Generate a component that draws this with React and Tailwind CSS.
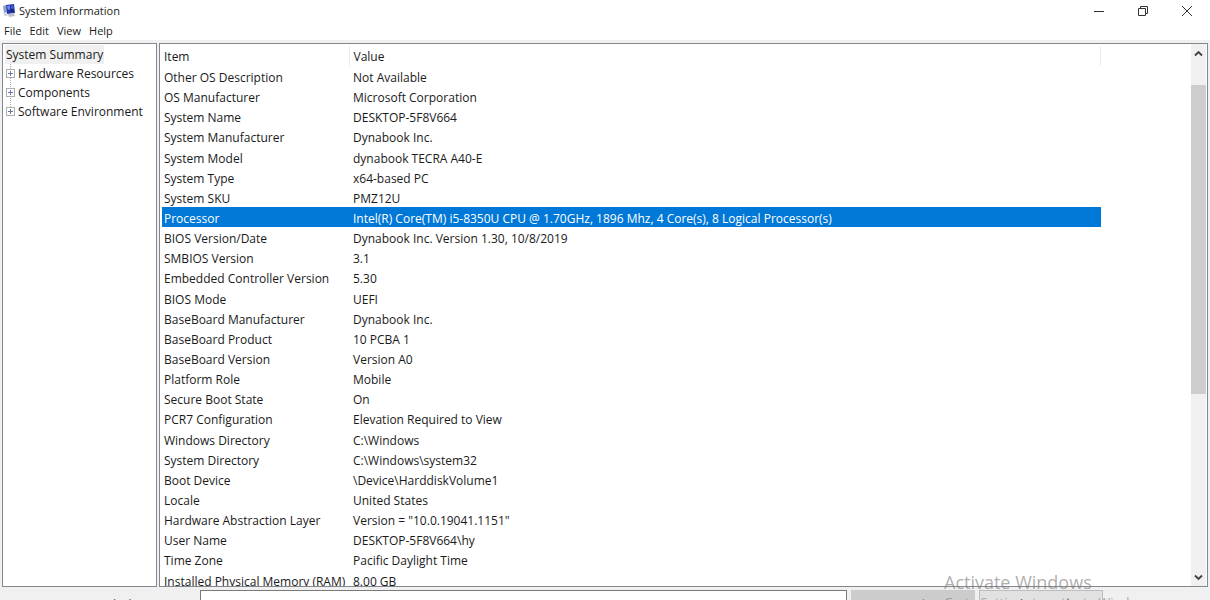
import React, { useState } from "react";

const menus = ["File", "Edit", "View", "Help"];

const categories = ["Hardware Resources", "Components", "Software Environment"];

const items = [
  ["Other OS Description", "Not Available"],
  ["OS Manufacturer", "Microsoft Corporation"],
  ["System Name", "DESKTOP-5F8V664"],
  ["System Manufacturer", "Dynabook Inc."],
  ["System Model", "dynabook TECRA A40-E"],
  ["System Type", "x64-based PC"],
  ["System SKU", "PMZ12U"],
  ["Processor", "Intel(R) Core(TM) i5-8350U CPU @ 1.70GHz, 1896 Mhz, 4 Core(s), 8 Logical Processor(s)"],
  ["BIOS Version/Date", "Dynabook Inc. Version 1.30, 10/8/2019"],
  ["SMBIOS Version", "3.1"],
  ["Embedded Controller Version", "5.30"],
  ["BIOS Mode", "UEFI"],
  ["BaseBoard Manufacturer", "Dynabook Inc."],
  ["BaseBoard Product", "10 PCBA 1"],
  ["BaseBoard Version", "Version A0"],
  ["Platform Role", "Mobile"],
  ["Secure Boot State", "On"],
  ["PCR7 Configuration", "Elevation Required to View"],
  ["Windows Directory", "C:\\Windows"],
  ["System Directory", "C:\\Windows\\system32"],
  ["Boot Device", "\\Device\\HarddiskVolume1"],
  ["Locale", "United States"],
  ["Hardware Abstraction Layer", 'Version = "10.0.19041.1151"'],
  ["User Name", "DESKTOP-5F8V664\\hy"],
  ["Time Zone", "Pacific Daylight Time"],
  ["Installed Physical Memory (RAM)", "8.00 GB"],
];

const AppIcon = () => (
  <svg width="14" height="14" viewBox="0 0 14 14" aria-hidden="true">
    <path d="M1 2 L4 1 L5 8 L2 9 Z" fill="#8f9fd0" />
    <path d="M4 1 L12 0 L13 9 L5 10 Z" fill="#2238a8" />
    <path d="M5 2 L8 1.5 L8 5 L6 6 Z" fill="#6f8de8" />
    <path d="M9 2 L11 1.5 L12 4 L9.5 5 Z" fill="#4564d4" />
    <path d="M8 6 L11 5 L12 8 L9 8 Z" fill="#1a2580" />
    <path d="M6 10 L12 9.5 L13 12 L7 13 Z" fill="#b9bfcc" />
    <path d="M1 9 L4 9 L6 12 L3 12 Z" fill="#cfd4de" />
  </svg>
);

const ExpandIcon = () => (
  <svg width="9" height="9" viewBox="0 0 9 9" shapeRendering="crispEdges" className="relative" aria-hidden="true">
    <rect x="0.5" y="0.5" width="8" height="8" fill="#fff" stroke="#adadad" />
    <path d="M2 4.5 H7 M4.5 2 V7" stroke="#6678ac" />
  </svg>
);

const Chevron = ({ d }) => (
  <svg width="9" height="9" viewBox="0 0 9 9" fill="none" stroke="#404040" strokeWidth="1.8" aria-hidden="true">
    <path d={d} />
  </svg>
);

const App = () => {
  const [selected, setSelected] = useState("Processor");

  return (
    <div className="relative flex h-screen flex-col overflow-hidden bg-[#f0f0f0] font-['Open_Sans',sans-serif] text-xs text-[#1a1a1a]">
      {/* Title bar */}
      <header className="flex h-[22px] shrink-0 items-center bg-white pr-px pl-[2px]">
        <AppIcon />
        <h1 className="ml-[3px] flex-1 text-[11px]">System Information</h1>
        <button aria-label="Minimize" className="flex h-full w-11 items-center justify-center">
          <svg width="10" height="10" viewBox="0 0 10 10" stroke="#333">
            <path d="M0 5.5 H10" />
          </svg>
        </button>
        <button aria-label="Restore" className="flex h-full w-11 items-center justify-center">
          <svg width="10" height="10" viewBox="0 0 10 10" fill="none" stroke="#333">
            <path d="M0.5 2.5 H7.5 V9.5 H0.5 Z M2.5 2.5 V0.5 H9.5 V7.5 H7.5" />
          </svg>
        </button>
        <button aria-label="Close" className="flex h-full w-11 items-center justify-center">
          <svg width="10" height="10" viewBox="0 0 10 10" stroke="#333">
            <path d="M0 0 L10 10 M10 0 L0 10" />
          </svg>
        </button>
      </header>

      {/* Menu bar */}
      <nav className="flex h-[18px] shrink-0 items-center gap-2 bg-white pl-1 text-[11px]">
        {menus.map((menu) => (
          <button key={menu}>{menu}</button>
        ))}
      </nav>

      <main className="mx-[2px] mt-[3px] flex min-h-0 flex-1 gap-[2px]">
        {/* Category tree */}
        <aside className="w-[155px] shrink-0 border border-[#828790] bg-white pt-px pl-[2px]">
          <button className="block h-[19px] bg-[#f0f0f0] px-[1px]">System Summary</button>
          <ul className="relative before:absolute before:top-0 before:bottom-[10px] before:left-[5px] before:border-l before:border-dotted before:border-[#b0b0b0]">
            {categories.map((category) => (
              <li key={category}>
                <button className="flex h-[19px] items-center gap-[3px] pl-px">
                  <ExpandIcon />
                  {category}
                </button>
              </li>
            ))}
          </ul>
        </aside>

        {/* Details list */}
        <section className="flex min-w-0 flex-1 border border-[#828790] bg-white">
          <div className="min-w-0 flex-1 overflow-hidden pt-[2px] pl-[2px]">
            <table className="h-[544px] w-[calc(100%-90px)] table-fixed border-collapse text-left whitespace-nowrap">
              <thead>
                <tr className="h-[20px]">
                  <th className="w-[187px] border-r border-[#ececec] p-0 pt-[2px] pl-[2px] font-normal">Item</th>
                  <th className="border-r border-[#ececec] p-0 pt-[2px] pl-1 font-normal">Value</th>
                </tr>
              </thead>
              <tbody>
                {items.map(([name, value]) => (
                  <tr
                    key={name}
                    onClick={() => setSelected(name)}
                    className={selected === name ? "bg-[#0078d7] text-white" : ""}
                  >
                    <td className="p-0 pt-1 pl-[2px]">{name}</td>
                    <td className="p-0 pt-1 pl-1">{value}</td>
                  </tr>
                ))}
              </tbody>
            </table>
          </div>

          {/* Scroll bar */}
          <div className="mr-[1px] flex w-[15px] shrink-0 flex-col bg-[#f0f0f0]">
            <button aria-label="Scroll up" className="flex h-[18px] items-center justify-center">
              <Chevron d="M1 6.5 L4.5 3 L8 6.5" />
            </button>
            <div className="flex flex-1 flex-col pt-[23px]">
              <div className="h-[64%] bg-[#cdcdcd]" />
            </div>
            <button aria-label="Scroll down" className="flex h-[18px] items-center justify-center">
              <Chevron d="M1 2.5 L4.5 6 L8 2.5" />
            </button>
          </div>
        </section>
      </main>

      {/* Find bar, cut off by the bottom of the window */}
      <form className="flex h-[13px] shrink-0 items-start gap-1 overflow-hidden pt-[3px] pr-[107px]">
        <label htmlFor="find" className="w-[196px] pt-[7px] pr-[46px] text-right text-[#444]">
          Find what:
        </label>
        <input id="find" className="h-[30px] min-w-0 flex-1 border border-[#7a7a7a] bg-white px-1" />
        <button type="button" className="h-[30px] w-[124px] bg-[#cccccc] text-[#838383]">
          Find
        </button>
        <button type="button" className="h-[30px] w-[124px] border border-[#bdbdbd] bg-[#e1e1e1] text-[#444]">
          Close Find
        </button>
      </form>

      {/* Activation watermark */}
      <div className="pointer-events-none absolute right-[46px] bottom-0 h-[30px] w-[220px] overflow-hidden whitespace-nowrap text-[#777777]/60">
        <p className="text-lg leading-6">Activate Windows</p>
        <p className="text-[13px] leading-4">Go to Settings to activate Windows.</p>
      </div>
    </div>
  );
};

export default App;
